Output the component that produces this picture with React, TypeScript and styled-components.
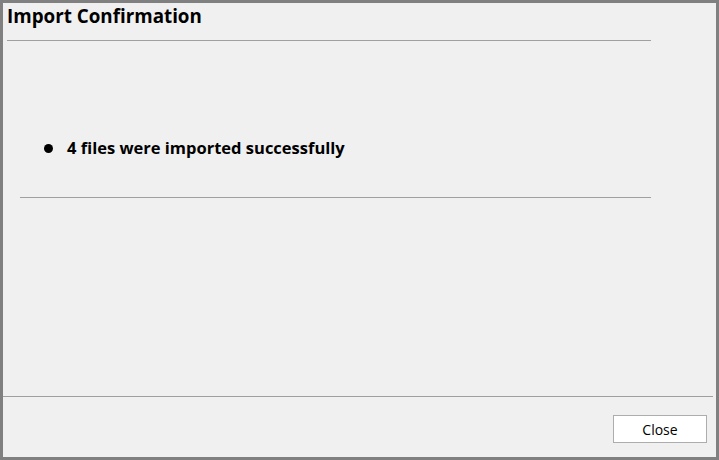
import React from "react";
import styled, { createGlobalStyle } from "styled-components";

const GlobalStyle = createGlobalStyle`
  html, body {
    margin: 0;
    padding: 0;
    background: #f0f0f0;
  }
  * {
    box-sizing: border-box;
  }
`;

const Window = styled.div`
  width: 719px;
  height: 460px;
  border: 3px solid #808080;
  background: #f0f0f0;
  display: flex;
  flex-direction: column;
  font-family: "Open Sans", "Noto Sans", sans-serif;
  color: #000;
`;

const Header = styled.div`
  height: 38px;
  margin: 0 65px 0 4px;
  border-bottom: 1px solid #a0a0a0;
  display: flex;
  align-items: flex-start;
`;

const Title = styled.h1`
  margin: 0;
  padding-top: 0;
  font-size: 18.8px;
  font-weight: 700;
  line-height: 26px;
`;

const Message = styled.div`
  height: 157px;
  margin: 0 65px 0 17px;
  border-bottom: 1px solid #a0a0a0;
  padding-top: 96px;
`;

const BulletList = styled.ul`
  margin: 0;
  padding: 0 0 0 24px;
  list-style: none;
`;

const Item = styled.li`
  display: flex;
  align-items: center;
  gap: 14px;
  font-size: 16.5px;
  font-weight: 700;
  line-height: 22px;

  &::before {
    content: "";
    width: 9px;
    height: 9px;
    border-radius: 50%;
    background: #000;
  }
`;

const Spacer = styled.div`
  flex: 1;
`;

const Footer = styled.div`
  height: 61px;
  margin-right: 3px;
  border-top: 1px solid #a0a0a0;
  display: flex;
  justify-content: flex-end;
  align-items: flex-start;
  padding: 18px 6px 0 0;
`;

const Button = styled.button`
  width: 94px;
  height: 28px;
  background: #fff;
  border: 1px solid #adadad;
  font-family: "Open Sans", "Noto Sans", sans-serif;
  font-size: 14px;
  color: #000;
  padding: 0;
  cursor: pointer;
`;

export default function App() {
  return (
    <>
      <GlobalStyle />
      <Window>
        <Header>
          <Title>Import Confirmation</Title>
        </Header>
        <Message>
          <BulletList>
            <Item>4 files were imported successfully</Item>
          </BulletList>
        </Message>
        <Spacer />
        <Footer>
          <Button>Close</Button>
        </Footer>
      </Window>
    </>
  );
}
